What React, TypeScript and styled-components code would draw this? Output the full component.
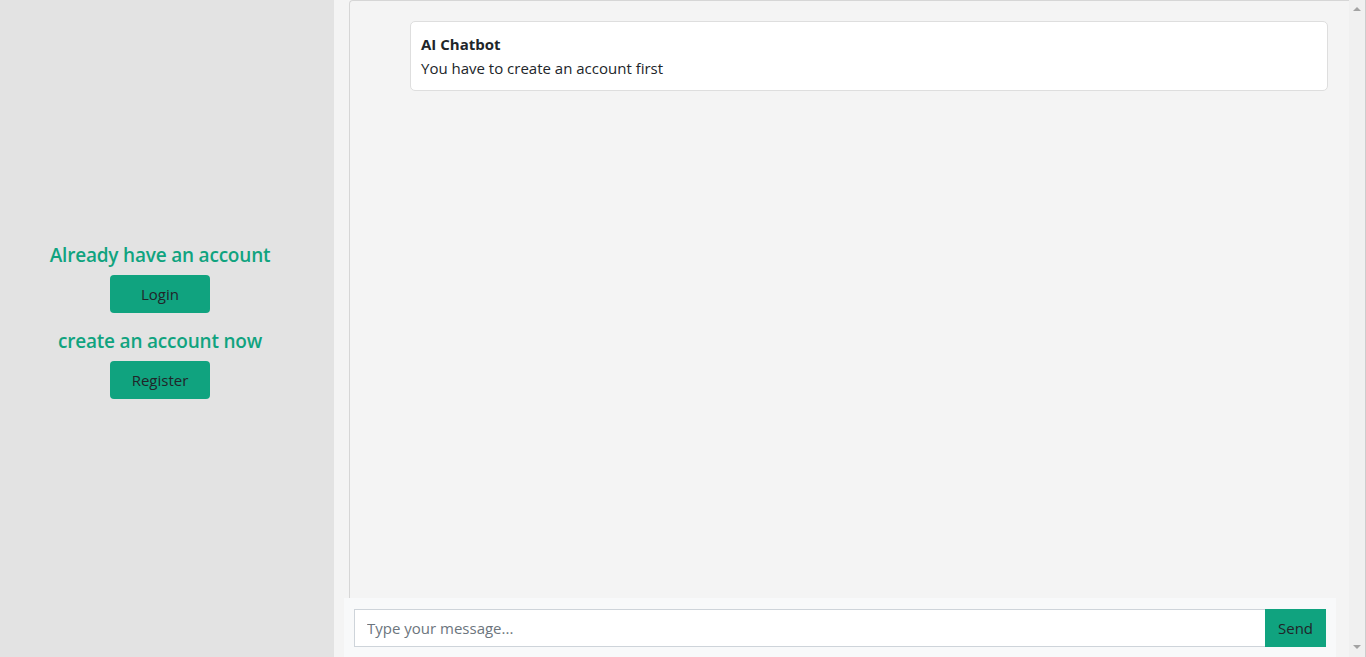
import React from "react";
import styled, { createGlobalStyle } from "styled-components";

const Global = createGlobalStyle`
  html, body { margin: 0; padding: 0; height: 100%; overflow: hidden; }
  body { font-family: "Open Sans", "Noto Sans", sans-serif; color: #212529; }
  #root { height: 100%; }
  * { box-sizing: border-box; }
`;

const Page = styled.div`
  display: flex;
  height: 657px;
  width: 1366px;
`;

const Sidebar = styled.aside`
  width: 334px;
  flex-shrink: 0;
  background: #e3e3e3;
  display: flex;
  flex-direction: column;
  align-items: center;
  justify-content: center;
  gap: 16px;
  padding: 0 14px 16px 0;
`;

const Group = styled.div`
  display: flex;
  flex-direction: column;
  align-items: center;
`;

const Heading = styled.h5`
  margin: 0 0 8px;
  font-size: 19px;
  line-height: 24px;
  font-weight: 600;
  color: #10a37f;
  letter-spacing: -0.2px;
`;

const GreenButton = styled.button`
  width: 100px;
  height: 38px;
  border: none;
  border-radius: 4px;
  background: #10a37f;
  color: #212529;
  font-family: inherit;
  font-size: 15px;
  cursor: pointer;
`;

const Main = styled.main`
  flex: 1;
  display: flex;
  flex-direction: column;
  background: #f4f4f4;
`;

const ChatBox = styled.section`
  flex: 1;
  margin-left: 15px;
  border: 1px solid #d6d6d6;
  border-right: none;
  border-bottom: none;
  border-top-left-radius: 4px;
  background: #f4f4f4;
  padding: 20px 21px 20px 60px;
`;

const Message = styled.div`
  background: #ffffff;
  border: 1px solid #dedede;
  border-radius: 5px;
  padding: 10px;
  font-size: 15px;
  line-height: 24px;
`;

const Sender = styled.div`
  font-weight: 700;
`;

const InputBar = styled.form`
  display: flex;
  height: 59px;
  margin: 0 13px 0 10px;
  padding: 11px 10px 10px;
  background: #f8f9fa;
`;

const TextInput = styled.input`
  flex: 1;
  height: 38px;
  border: 1px solid #ced4da;
  border-right: none;
  border-radius: 0;
  padding: 0 12px;
  font-family: inherit;
  font-size: 15px;
  color: #212529;
  background: #fff;
  outline: none;
  &::placeholder { color: #6c757d; }
`;

const SendButton = styled.button`
  width: 61px;
  height: 38px;
  border: none;
  border-radius: 0;
  background: #10a37f;
  color: #212529;
  font-family: inherit;
  font-size: 15px;
  cursor: pointer;
`;

const Scrollbar = styled.div`
  width: 17px;
  flex-shrink: 0;
  background: #f0f0f0;
  border-right: 1px solid #cdcdcd;
  display: flex;
  flex-direction: column;
  justify-content: space-between;
  align-items: center;
  padding: 7px 0 8px;
`;

const Arrow = styled.div<{ $down?: boolean }>`
  width: 0;
  height: 0;
  border-left: 4px solid transparent;
  border-right: 4px solid transparent;
  ${(p) => (p.$down ? "border-top: 4px solid #a3a3a3;" : "border-bottom: 4px solid #a3a3a3;")}
`;

export default function App() {
  return (
    <>
      <Global />
      <Page>
        <Sidebar>
          <Group>
            <Heading>Already have an account</Heading>
            <GreenButton type="button">Login</GreenButton>
          </Group>
          <Group>
            <Heading>create an account now</Heading>
            <GreenButton type="button">Register</GreenButton>
          </Group>
        </Sidebar>
        <Main>
          <ChatBox>
            <Message>
              <Sender>AI Chatbot</Sender>
              <div>You have to create an account first</div>
            </Message>
          </ChatBox>
          <InputBar onSubmit={(e) => e.preventDefault()}>
            <TextInput placeholder="Type your message..." />
            <SendButton type="submit">Send</SendButton>
          </InputBar>
        </Main>
        <Scrollbar>
          <Arrow />
          <Arrow $down />
        </Scrollbar>
      </Page>
    </>
  );
}
